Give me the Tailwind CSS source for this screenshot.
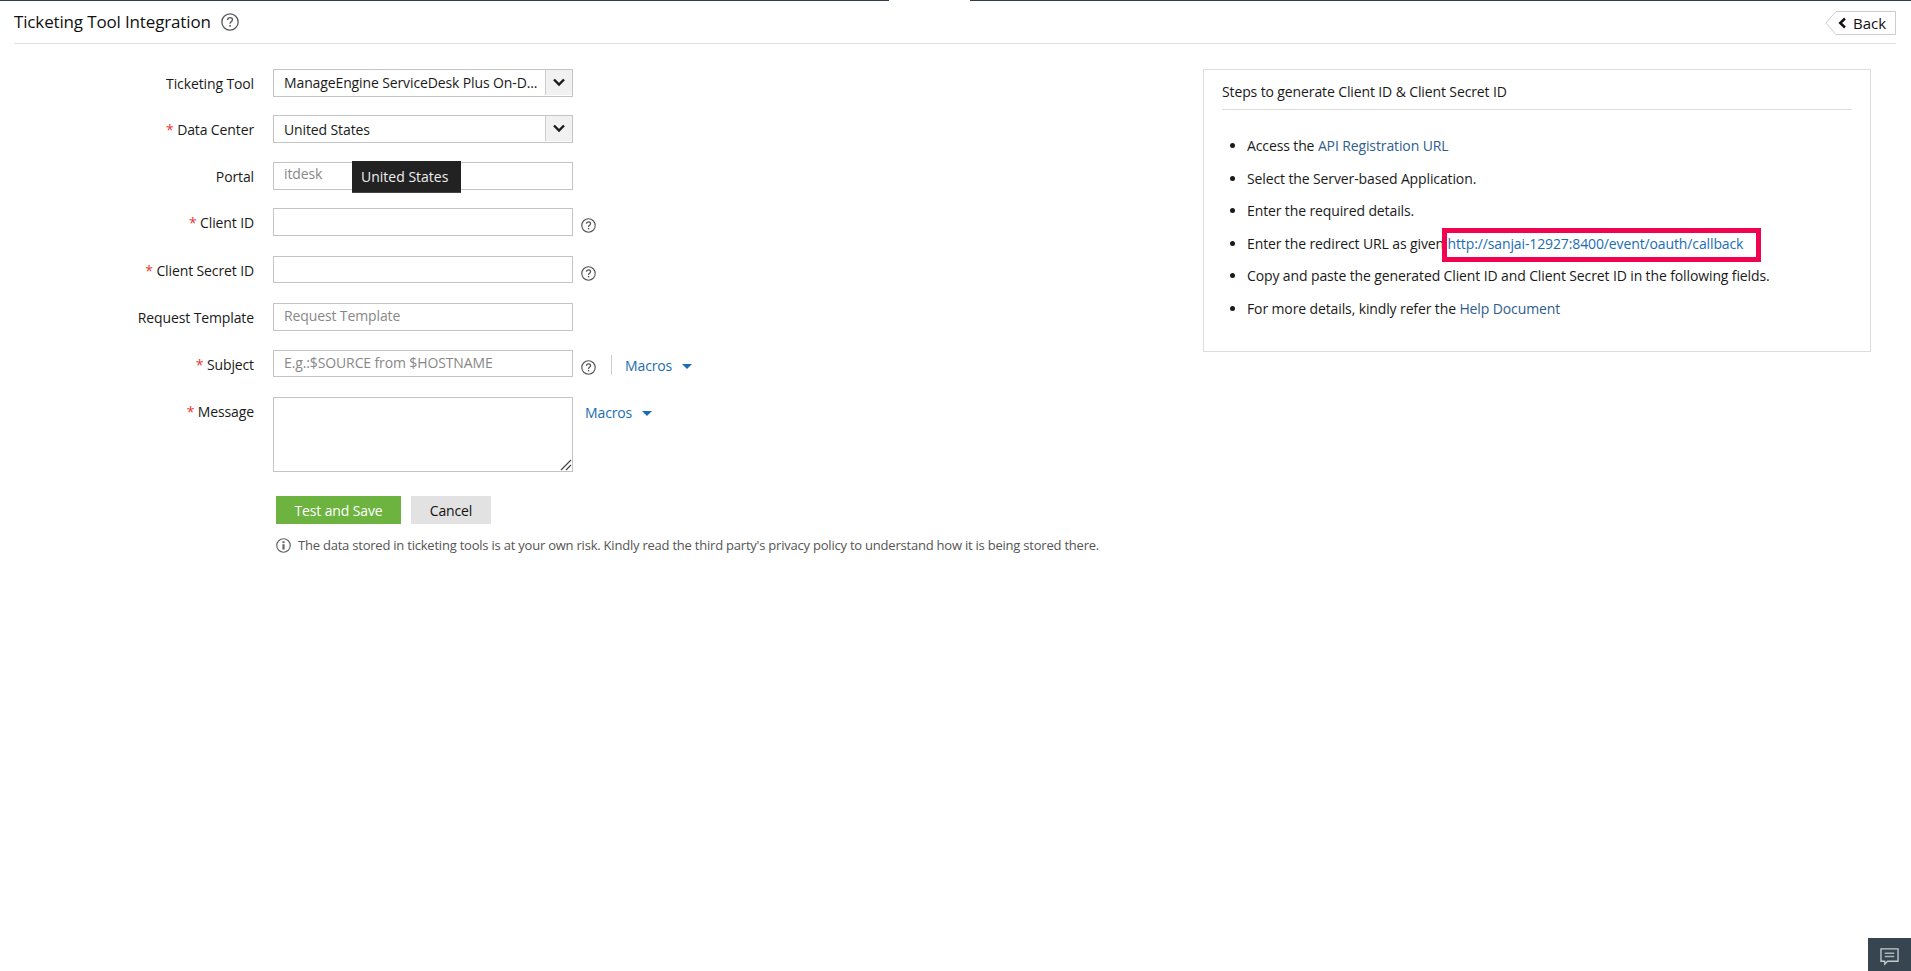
<!DOCTYPE html>
<html lang="en">
<head>
    <meta charset="UTF-8">
    <title>Ticketing Tool Integration</title>
    <script src="https://cdn.jsdelivr.net/npm/@tailwindcss/browser@4"></script>
</head>
<body class="bg-white text-[#1a1a1a] text-[14px] tracking-[-0.12px] font-['Open_Sans',sans-serif] h-[971px] overflow-hidden relative">
    <!-- top strip -->
    <div class="flex h-px">
        <div class="w-[889px] bg-[#2f3e46]"></div>
        <div class="w-[81px]"></div>
        <div class="flex-1 bg-[#2f3e46]"></div>
    </div>

    <!-- header -->
    <div class="ml-[14px] mr-[15px] h-[43px] border-b border-[#e0e0e0] flex items-center justify-between pb-[1px]">
        <div class="flex items-center gap-[10px]">
            <h1 class="text-[17px] tracking-[-0.15px] leading-[42px] font-normal text-[#111]">Ticketing Tool Integration</h1>
            <svg class="w-[18px] h-[18px]" viewBox="0 0 17 17" fill="none"><circle cx="8.5" cy="8.5" r="7.7" stroke="#555" stroke-width="1.2"/><path d="M6.2 6.6c0-1.4 1-2.2 2.3-2.2s2.3.8 2.3 2c0 1.9-2.3 1.9-2.3 3.7" stroke="#555" stroke-width="1.3"/><rect x="7.8" y="11.3" width="1.5" height="1.6" fill="#555"/></svg>
        </div>
        <div class="relative self-start mt-[10px] w-[71px] h-[24px]">
            <svg class="absolute inset-0" width="71" height="24" viewBox="0 0 71 24" fill="none"><path d="M70.5.5H11L.8 12 11 23.5h59.5z" fill="#fff" stroke="#ccc"/></svg>
            <div class="absolute inset-0 flex items-center pl-[13px] gap-[6px] text-[15px] tracking-normal text-[#111]">
                <svg width="9" height="12" viewBox="0 0 8 10" fill="none"><path d="M6.2 1 2 5l4.2 4" stroke="#111" stroke-width="2.2"/></svg>
                <span>Back</span>
            </div>
        </div>
    </div>

    <div class="flex">
        <!-- form -->
        <form class="w-[1203px] pt-[25px] shrink-0">
            <div class="flex h-[46px]">
                <label class="w-[254px] text-right leading-[28px] pt-[1px]">Ticketing Tool</label>
                <div class="ml-[19px] w-[300px] h-[28px] border border-[#c4c4c4] flex">
                    <span class="flex-1 pl-[10px] leading-[25px] truncate">ManageEngine ServiceDesk Plus On-D...</span>
                    <span class="w-[27px] mb-[1px] bg-[#f1f1f1] border-l border-[#ccc] flex items-center justify-center"><svg width="14" height="9" viewBox="0 0 14 9" fill="none"><path d="m2 1.5 5 5 5-5" stroke="#1a1a1a" stroke-width="2.4"/></svg></span>
                </div>
            </div>
            <div class="flex h-[47px]">
                <label class="w-[254px] text-right leading-[28px] pt-[1px]"><span class="text-[#e53935]">*</span> Data Center</label>
                <div class="ml-[19px] w-[300px] h-[28px] border border-[#c4c4c4] flex">
                    <span class="flex-1 pl-[10px] leading-[27px] truncate">United States</span>
                    <span class="w-[27px] mb-[1px] bg-[#f1f1f1] border-l border-[#ccc] flex items-center justify-center"><svg width="14" height="9" viewBox="0 0 14 9" fill="none"><path d="m2 1.5 5 5 5-5" stroke="#1a1a1a" stroke-width="2.4"/></svg></span>
                </div>
            </div>
            <div class="flex h-[46px]">
                <label class="w-[254px] text-right leading-[28px] pt-[1px]">Portal</label>
                <div class="relative ml-[19px] w-[300px] h-[28px] border border-[#c4c4c4] pl-[10px] leading-[22px] text-[#888]">itdesk
                    <div class="absolute left-[78px] top-[-2px] w-[109px] h-[32px] bg-[#222] text-[#eee] tracking-normal flex items-center pl-[9px] border-b border-[#444]">United States</div>
                </div>
            </div>
            <div class="flex h-[48px]">
                <label class="w-[254px] text-right leading-[28px] pt-[1px]"><span class="text-[#e53935]">*</span> Client ID</label>
                <div class="ml-[19px] w-[300px] h-[28px] border border-[#c4c4c4]"></div>
                <svg class="ml-[8px] mt-[10px] w-[15px] h-[15px]" viewBox="0 0 17 17" fill="none"><circle cx="8.5" cy="8.5" r="7.6" stroke="#555" stroke-width="1.3"/><path d="M6.2 6.6c0-1.4 1-2.2 2.3-2.2s2.3.8 2.3 2c0 1.9-2.3 1.9-2.3 3.7" stroke="#555" stroke-width="1.4"/><rect x="7.8" y="11.3" width="1.5" height="1.6" fill="#555"/></svg>
            </div>
            <div class="flex h-[47px]">
                <label class="w-[254px] text-right leading-[28px] pt-[1px]"><span class="text-[#e53935]">*</span> Client Secret ID</label>
                <div class="ml-[19px] w-[300px] h-[27px] border border-[#c4c4c4]"></div>
                <svg class="ml-[8px] mt-[10px] w-[15px] h-[15px]" viewBox="0 0 17 17" fill="none"><circle cx="8.5" cy="8.5" r="7.6" stroke="#555" stroke-width="1.3"/><path d="M6.2 6.6c0-1.4 1-2.2 2.3-2.2s2.3.8 2.3 2c0 1.9-2.3 1.9-2.3 3.7" stroke="#555" stroke-width="1.4"/><rect x="7.8" y="11.3" width="1.5" height="1.6" fill="#555"/></svg>
            </div>
            <div class="flex h-[47px]">
                <label class="w-[254px] text-right leading-[28px] pt-[1px]">Request Template</label>
                <div class="ml-[19px] w-[300px] h-[28px] border border-[#c4c4c4] pl-[10px] leading-[24px] text-[#888]">Request Template</div>
            </div>
            <div class="flex h-[47px]">
                <label class="w-[254px] text-right leading-[28px] pt-[1px]"><span class="text-[#e53935]">*</span> Subject</label>
                <div class="ml-[19px] w-[300px] h-[27px] border border-[#c4c4c4] pl-[10px] leading-[23px] text-[#888]">E.g.:$SOURCE from $HOSTNAME</div>
                <svg class="ml-[8px] mt-[10px] w-[15px] h-[15px]" viewBox="0 0 17 17" fill="none"><circle cx="8.5" cy="8.5" r="7.6" stroke="#555" stroke-width="1.3"/><path d="M6.2 6.6c0-1.4 1-2.2 2.3-2.2s2.3.8 2.3 2c0 1.9-2.3 1.9-2.3 3.7" stroke="#555" stroke-width="1.4"/><rect x="7.8" y="11.3" width="1.5" height="1.6" fill="#555"/></svg>
                <span class="ml-[15px] mt-[5px] w-px h-[20px] bg-[#ccc]"></span>
                <a class="ml-[13px] leading-[32px] text-[#1a6db5]">Macros</a>
                <span class="ml-[10px] mt-[14px] w-0 h-0 border-x-[5px] border-x-transparent border-t-[5px] border-t-[#1a6db5]"></span>
            </div>
            <div class="flex">
                <label class="w-[254px] text-right leading-[28px] pt-[1px]"><span class="text-[#e53935]">*</span> Message</label>
                <div class="relative ml-[19px] w-[300px] h-[75px] border border-[#c4c4c4]">
                    <svg class="absolute right-0 bottom-0" width="12" height="12" viewBox="0 0 12 12" fill="none"><path d="M1 11 11 1M6 11l5-5" stroke="#444" stroke-width="1.2"/></svg>
                </div>
                <a class="ml-[12px] leading-[32px] text-[#1a6db5]">Macros</a>
                <span class="ml-[10px] mt-[14px] w-0 h-0 border-x-[5px] border-x-transparent border-t-[5px] border-t-[#1a6db5]"></span>
            </div>
            <div class="flex gap-[10px] ml-[276px] mt-[24px]">
                <button type="button" class="w-[125px] h-[28px] bg-[#6cb33f] text-white">Test and Save</button>
                <button type="button" class="w-[80px] h-[28px] bg-[#e2e2e2] text-[#111]">Cancel</button>
            </div>
            <div class="flex items-center ml-[276px] mt-[12px] text-[13px] tracking-[-0.22px] text-[#555] leading-[18px]">
                <svg class="w-[15px] h-[15px] mr-[7px]" viewBox="0 0 14 14" fill="none"><circle cx="7" cy="7" r="6.3" stroke="#666" stroke-width="1.1"/><rect x="6" y="5.8" width="2" height="5" fill="#666"/><rect x="6" y="3" width="2" height="1.8" fill="#666"/></svg>
                The data stored in ticketing tools is at your own risk. Kindly read the third party's privacy policy to understand how it is being stored there.
            </div>
        </form>

        <!-- steps panel -->
        <div class="mt-[25px] w-[668px] h-[283px] border border-[#ddd] px-[18px] pt-[10px] shrink-0">
            <div class="h-[30px] border-b border-[#ddd] leading-[24px]">Steps to generate Client ID &amp; Client Secret ID</div>
            <ul class="list-disc pl-[25px] mt-[20px] leading-[32.6px]">
                <li>Access the <a class="text-[#2f5d8f]">API Registration URL</a></li>
                <li>Select the Server-based Application.</li>
                <li>Enter the required details.</li>
                <li class="relative">Enter the redirect URL as given <a class="text-[#1a6db5]">http://sanjai-12927:8400/event/oauth/callback</a>
                    <div class="absolute left-[195px] top-0 w-[319px] h-[34px] border-[5px] border-[#f0044f]"></div>
                </li>
                <li>Copy and paste the generated Client ID and Client Secret ID in the following fields.</li>
                <li>For more details, kindly refer the <a class="text-[#2f5d8f]">Help Document</a></li>
            </ul>
        </div>
    </div>

    <!-- chat button -->
    <div class="absolute right-0 bottom-0 w-[43px] h-[33px] pt-[5px] bg-[#36454f] flex items-center justify-center">
        <svg width="19" height="18" viewBox="0 0 20 19" fill="none"><path d="M1 1h18v13H8l-3 3v-3H1z" stroke="#c4ccd0" stroke-width="1.4"/><path d="M5 5.5h10M5 9h10" stroke="#aab4b9" stroke-width="1.6"/></svg>
    </div>
</body>
</html>
